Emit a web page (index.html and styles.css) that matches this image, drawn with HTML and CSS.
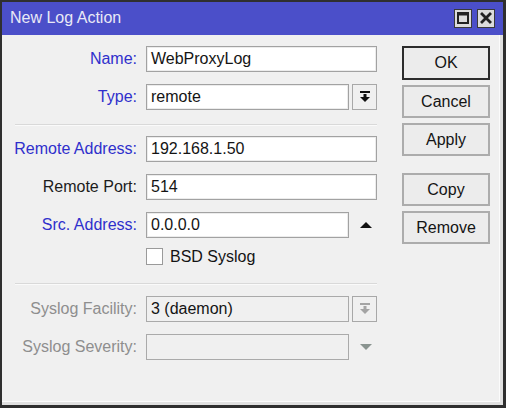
FILE: index.html
```html
<!DOCTYPE html>
<html>
<head>
<meta charset="utf-8">
<link rel="stylesheet" href="styles.css">
</head>
<body>
<div class="window">
  <div class="titlebar">
    <span class="title">New Log Action</span>
    <div class="tb-buttons">
      <span class="tb-btn">
        <svg width="12" height="12" viewBox="0 0 12 12"><rect x="1" y="1.5" width="10" height="9.5" fill="none" stroke="#222" stroke-width="2"/><rect x="0" y="0" width="12" height="3.5" fill="#222"/></svg>
      </span>
      <span class="tb-btn">
        <svg width="12" height="12" viewBox="0 0 12 12"><path d="M2 2 L10 10 M10 2 L2 10" stroke="#222" stroke-width="2.8" stroke-linecap="square"/></svg>
      </span>
    </div>
  </div>
  <div class="body">
    <div class="form">
      <div class="row">
        <label class="lbl blue">Name:</label>
        <div class="field"><div class="input">WebProxyLog</div></div>
      </div>
      <div class="row">
        <label class="lbl blue">Type:</label>
        <div class="field">
          <div class="input">remote</div>
          <div class="dd">
            <svg width="12" height="12" viewBox="0 0 12 12"><rect x="1" y="0" width="10" height="2" fill="#111"/><rect x="4.5" y="3" width="3" height="3" fill="#111"/><polygon points="1,6 11,6 6,11" fill="#111"/></svg>
          </div>
        </div>
      </div>
      <div class="sep sep-top"></div>
      <div class="row">
        <label class="lbl blue">Remote Address:</label>
        <div class="field"><div class="input">192.168.1.50</div></div>
      </div>
      <div class="row">
        <label class="lbl">Remote Port:</label>
        <div class="field"><div class="input">514</div></div>
      </div>
      <div class="row">
        <label class="lbl blue">Src. Address:</label>
        <div class="field">
          <div class="input">0.0.0.0</div>
          <div class="tri-slot"><span class="tri-up"></span></div>
        </div>
      </div>
      <div class="row cb-row">
        <span class="lbl"></span>
        <div class="field">
          <span class="checkbox"></span>
          <span class="cb-text">BSD Syslog</span>
        </div>
      </div>
      <div class="sep sep-bottom"></div>
      <div class="row">
        <label class="lbl grey">Syslog Facility:</label>
        <div class="field">
          <div class="input disabled">3 (daemon)</div>
          <div class="dd disabled">
            <svg width="12" height="12" viewBox="0 0 12 12"><rect x="1" y="0" width="10" height="2" fill="#a4a4a4"/><rect x="4.5" y="3" width="3" height="3" fill="#a4a4a4"/><polygon points="1,6 11,6 6,11" fill="#a4a4a4"/></svg>
          </div>
        </div>
      </div>
      <div class="row">
        <label class="lbl grey">Syslog Severity:</label>
        <div class="field">
          <div class="input disabled"></div>
          <div class="tri-slot"><span class="tri-down"></span></div>
        </div>
      </div>
    </div>
    <div class="buttons">
      <button class="btn default">OK</button>
      <button class="btn">Cancel</button>
      <button class="btn">Apply</button>
      <button class="btn gap-before">Copy</button>
      <button class="btn">Remove</button>
    </div>
  </div>
</div>
</body>
</html>
```
FILE: styles.css
```css
* { box-sizing: border-box; }
html, body { margin: 0; padding: 0; }
body {
  width: 506px;
  height: 408px;
  overflow: hidden;
  font-family: "Liberation Sans", Arial, sans-serif;
  font-size: 16px;
  background: #f0f0f0;
}
.window {
  width: 506px;
  height: 408px;
  border: 2px solid #2f2f2f;
  border-right-width: 3px;
  border-bottom-width: 3px;
  display: flex;
  flex-direction: column;
  background: #f0f0f0;
}
.titlebar {
  height: 33px;
  flex: none;
  background: #4b4fc9;
  display: flex;
  align-items: center;
  justify-content: space-between;
  padding: 0 8px 0 8px;
}
.title {
  color: #e9e9f6;
  font-size: 16px;
  margin-top: -1px;
}
.tb-buttons {
  display: flex;
  gap: 5px;
  margin-top: -1px;
}
.tb-btn {
  width: 18px;
  height: 19px;
  background: #dcdcdc;
  border: 1px solid #3a3a3a;
  display: flex;
  align-items: center;
  justify-content: center;
}
.body {
  flex: 1;
  display: flex;
  padding: 11px 10px 0 10px;
  border-right: 3px solid #e0e0e0;
  border-bottom: 3px solid #e0e0e0;
  box-shadow: inset -1px -1px 0 #fbfbfb;
}
.form {
  width: 365px;
  display: flex;
  flex-direction: column;
  gap: 12px;
}
.row {
  display: flex;
  align-items: center;
  height: 26px;
  gap: 9px;
}
.lbl {
  width: 125px;
  flex: none;
  text-align: right;
  color: #1c1c1c;
  white-space: nowrap;
}
.lbl.blue { color: #2f2fcc; }
.lbl.grey { color: #8e8e8e; }
.field {
  width: 231px;
  height: 100%;
  display: flex;
  align-items: center;
  gap: 3px;
}
.input {
  flex: 1;
  height: 100%;
  background: #fff;
  border: 1px solid #a2a2a2;
  box-shadow: inset 0 0 0 1px #ececec;
  padding: 0 4px;
  display: flex;
  align-items: center;
  color: #141414;
  white-space: nowrap;
}
.input.disabled {
  background: #f0f0f0;
  border-color: #aaaaaa;
  box-shadow: none;
}
.dd {
  width: 25px;
  height: 100%;
  flex: none;
  background: #f0f0f0;
  border: 1px solid #a8a8a8;
  display: flex;
  align-items: center;
  justify-content: center;
}
.tri-slot {
  width: 25px;
  flex: none;
  height: 100%;
  display: flex;
  align-items: center;
  justify-content: center;
  padding-left: 2px;
}
.tri-up {
  width: 0;
  height: 0;
  border-left: 6px solid transparent;
  border-right: 6px solid transparent;
  border-bottom: 6px solid #111;
}
.tri-down {
  width: 0;
  height: 0;
  border-left: 6px solid transparent;
  border-right: 6px solid transparent;
  border-top: 6px solid #8a9490;
}
.sep {
  height: 1px;
  margin-left: 3px;
  background: #d9d9d9;
  box-shadow: 0 1px 0 #fafafa;
  flex: none;
}
.sep-top { margin-top: 2px; margin-bottom: -1px; }
.sep-bottom { margin-top: 6px; }
.cb-row {
  height: 17px;
  margin-top: -2px;
}
.cb-row .field { gap: 7px; }
.checkbox {
  width: 17px;
  height: 17px;
  background: #fff;
  border: 1px solid #9a9a9a;
  flex: none;
}
.cb-text { color: #141414; }
.buttons {
  margin-left: 25px;
  width: 88px;
  display: flex;
  flex-direction: column;
  gap: 5px;
  padding-top: -1px;
}
.btn {
  width: 88px;
  height: 33px;
  background: #ececec;
  border: 2px solid #acacac;
  font-family: "Liberation Sans", Arial, sans-serif;
  font-size: 16px;
  color: #141414;
  padding: 0;
  margin: 0;
}
.btn.default {
  border: 2px solid #2c2c2c;
  height: 34px;
}
.btn.gap-before { margin-top: 12px; }
```
